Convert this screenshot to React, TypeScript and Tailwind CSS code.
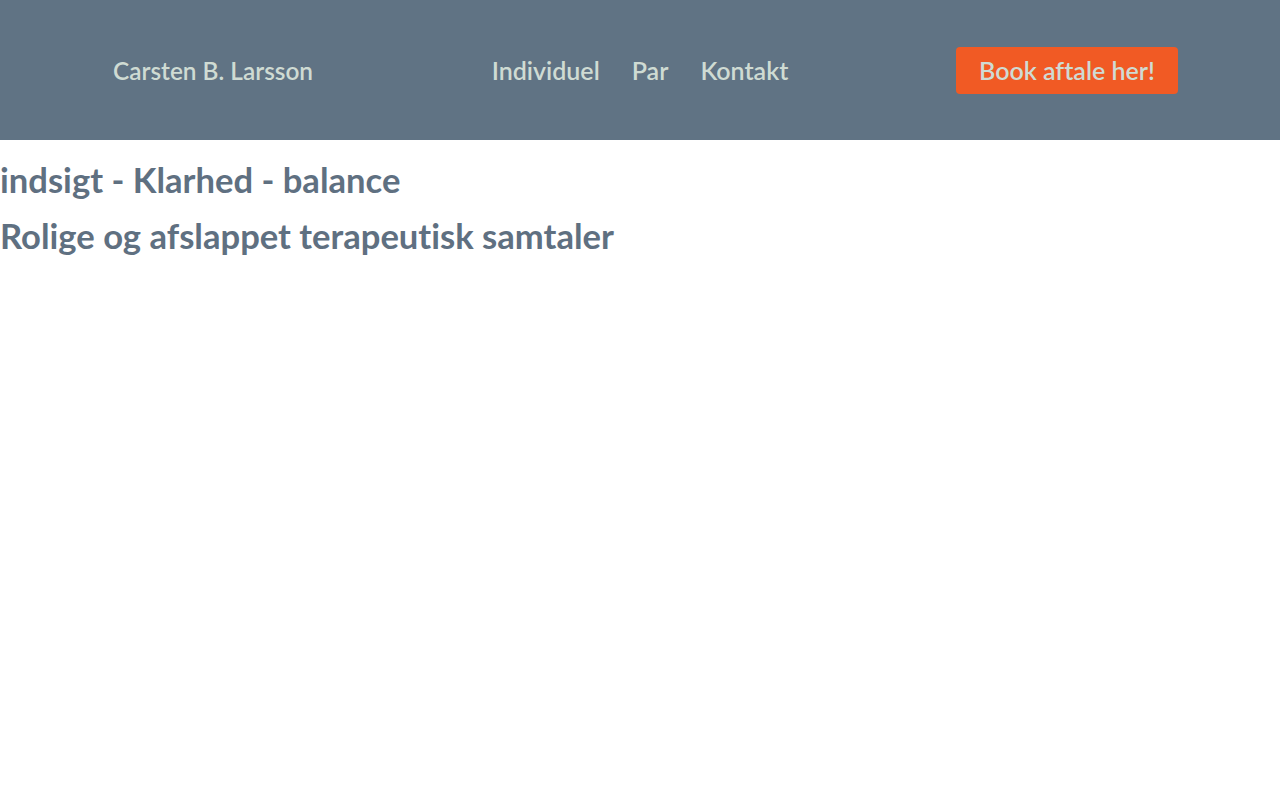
import React from 'react';

const font = { fontFamily: 'Lato, "Open Sans", sans-serif', fontVariantLigatures: 'none' as const };

export default function App() {
  return (
    <div className="min-h-screen bg-white" style={font}>
      <header className="h-[140px] bg-[#607384] px-[102px] grid grid-cols-3 items-center">
        <div className="pl-[11px] pt-[2px] text-[24.4px] font-semibold text-[#cfdbd3]">Carsten B. Larsson</div>
        <nav className="flex justify-center gap-8 pt-[1px] text-[25px] font-semibold text-[#cfdbd3]">
          <a>Individuel</a>
          <a>Par</a>
          <a>Kontakt</a>
        </nav>
        <div className="flex justify-end">
          <button className="h-[47px] w-[222px] pt-[2px] rounded-[4px] bg-[#f15a24] text-[25px] font-semibold text-[#cfdbd3]">
            Book aftale her!
          </button>
        </div>
      </header>
      <main className="text-[#5f7081] font-bold text-[34.6px]">
        <h2 className="leading-[40px] mt-[20px]">indsigt - Klarhed - balance</h2>
        <h2 className="leading-[40px] mt-[16px]">Rolige og afslappet terapeutisk samtaler</h2>
      </main>
    </div>
  );
}
